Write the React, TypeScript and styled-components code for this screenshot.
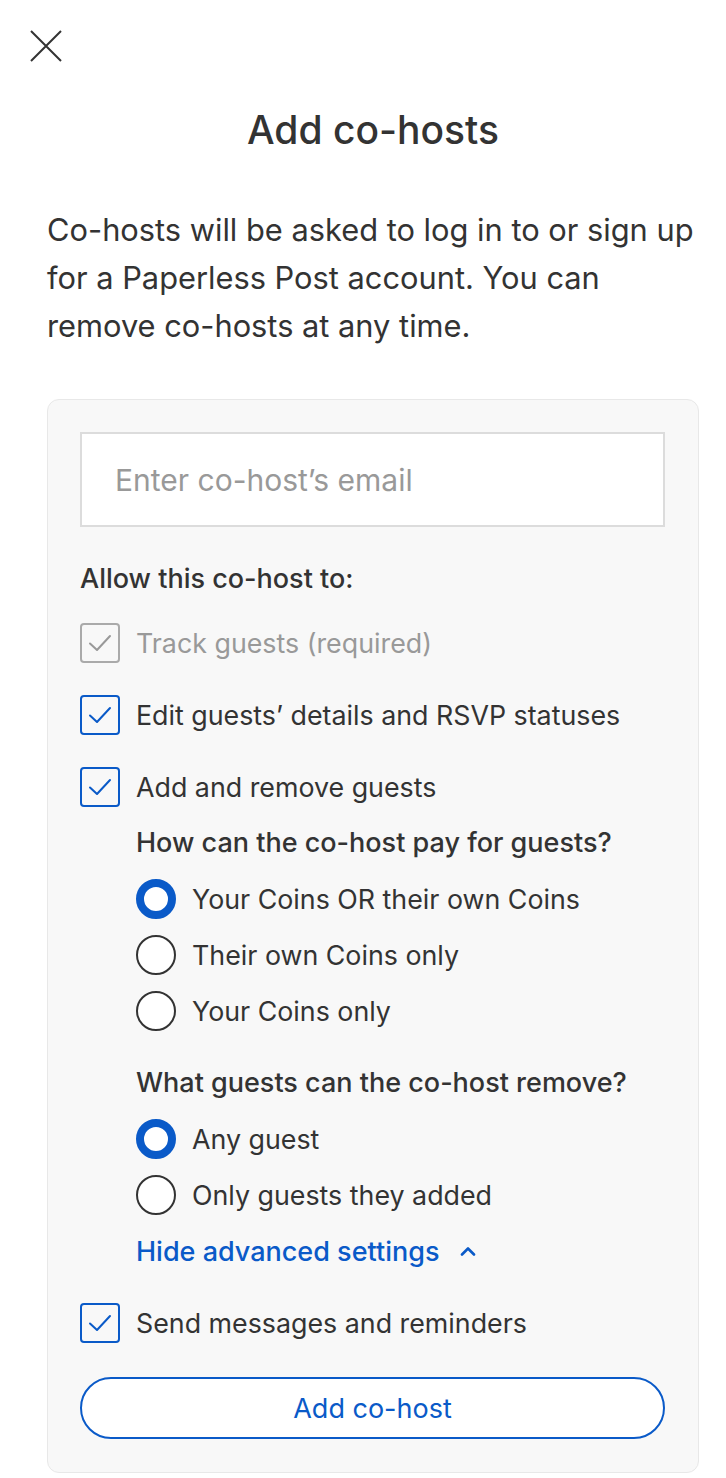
import React from "react";
import styled, { createGlobalStyle } from "styled-components";

const Global = createGlobalStyle`
  * { box-sizing: border-box; }
  body { margin: 0; background: #fff; font-family: Inter, "Open Sans", sans-serif; color: #333; }
`;

const BLUE = "#0a5ac8";

const Page = styled.div`
  width: 726px;
  padding: 30px 27px 0 47px;
  display: flex;
  flex-direction: column;
`;

const CloseButton = styled.button`
  width: 32px;
  height: 32px;
  margin-left: -17px;
  padding: 0;
  border: none;
  background: none;
  display: flex;
  align-items: center;
  justify-content: center;
`;

const Title = styled.h1`
  margin: 48px 0 0;
  font-size: 39px;
  line-height: 40px;
  font-weight: 500;
  text-align: center;
  color: #333;
`;

const Description = styled.p`
  margin: 56px 0 0;
  font-size: 30.8px;
  line-height: 48px;
  color: #333;
`;

const Card = styled.div`
  margin-top: 49px;
  background: #f8f8f8;
  border: 1px solid #e8e8e8;
  border-radius: 12px;
  padding: 32px 33px 33px 32px;
  display: flex;
  flex-direction: column;
`;

const EmailInput = styled.input`
  height: 95px;
  border: 2px solid #dcdcdc;
  background: #fff;
  padding: 0 33px;
  font-family: inherit;
  font-size: 30px;
  color: #333;
  outline: none;
  &::placeholder { color: #999; }
`;

const SectionLabel = styled.div<{ $mt: number; $indent?: boolean }>`
  margin-top: ${(p) => p.$mt}px;
  margin-left: ${(p) => (p.$indent ? 56 : 0)}px;
  font-size: 27px;
  line-height: 32px;
  font-weight: 500;
  color: #333;
`;

const OptionRow = styled.label<{ $mt: number; $indent?: boolean }>`
  margin-top: ${(p) => p.$mt}px;
  margin-left: ${(p) => (p.$indent ? 56 : 0)}px;
  display: flex;
  align-items: center;
  gap: 16px;
  height: 40px;
`;

const OptionText = styled.span<{ $muted?: boolean }>`
  font-size: 26.8px;
  color: ${(p) => (p.$muted ? "#999" : "#333")};
`;

const Box = styled.span<{ $disabled?: boolean }>`
  width: 40px;
  height: 40px;
  flex: none;
  border: 2px solid ${(p) => (p.$disabled ? "#aaa" : BLUE)};
  border-radius: 4px;
  display: flex;
  align-items: center;
  justify-content: center;
`;

const Radio = styled.span<{ $on?: boolean }>`
  width: 40px;
  height: 40px;
  flex: none;
  border-radius: 50%;
  border: ${(p) => (p.$on ? `8px solid ${BLUE}` : "2px solid #333")};
  background: #fff;
`;

const Toggle = styled.button`
  margin-top: 20px;
  margin-left: 56px;
  align-self: flex-start;
  padding: 0;
  border: none;
  background: none;
  height: 32px;
  display: flex;
  align-items: center;
  gap: 21px;
  font-family: inherit;
  font-size: 27px;
  font-weight: 500;
  color: ${BLUE};
`;

const AddButton = styled.button`
  margin-top: 34px;
  height: 62px;
  border: 2px solid ${BLUE};
  border-radius: 31px;
  background: #fff;
  font-family: inherit;
  font-size: 27px;
  color: ${BLUE};
`;

const Check = ({ color }: { color: string }) => (
  <svg width="26" height="20" viewBox="0 0 26 20" fill="none">
    <path d="M3 10.5 L10 17 L23 3" stroke={color} strokeWidth="2" strokeLinecap="round" strokeLinejoin="round" />
  </svg>
);

const CheckOption = ({ label, mt, disabled }: { label: string; mt: number; disabled?: boolean }) => (
  <OptionRow $mt={mt}>
    <Box $disabled={disabled}>
      <Check color={disabled ? "#999" : BLUE} />
    </Box>
    <OptionText $muted={disabled}>{label}</OptionText>
  </OptionRow>
);

const RadioOption = ({ label, mt, on }: { label: string; mt: number; on?: boolean }) => (
  <OptionRow $mt={mt} $indent>
    <Radio $on={on} />
    <OptionText>{label}</OptionText>
  </OptionRow>
);

export default function App() {
  return (
    <>
      <Global />
      <Page>
        <CloseButton aria-label="Close">
          <svg width="32" height="32" viewBox="0 0 32 32">
            <path d="M1 1 L31 31 M31 1 L1 31" stroke="#333" strokeWidth="2" />
          </svg>
        </CloseButton>
        <Title>Add co-hosts</Title>
        <Description>
          Co-hosts will be asked to log in to or sign up for a Paperless Post account. You can remove co-hosts at any time.
        </Description>
        <Card>
          <EmailInput placeholder="Enter co-host’s email" />
          <SectionLabel $mt={36}>Allow this co-host to:</SectionLabel>
          <CheckOption mt={28} label="Track guests (required)" disabled />
          <CheckOption mt={32} label="Edit guests’ details and RSVP statuses" />
          <CheckOption mt={32} label="Add and remove guests" />
          <SectionLabel $mt={20} $indent>How can the co-host pay for guests?</SectionLabel>
          <RadioOption mt={20} on label="Your Coins OR their own Coins" />
          <RadioOption mt={16} label="Their own Coins only" />
          <RadioOption mt={16} label="Your Coins only" />
          <SectionLabel $mt={36} $indent>What guests can the co-host remove?</SectionLabel>
          <RadioOption mt={20} on label="Any guest" />
          <RadioOption mt={16} label="Only guests they added" />
          <Toggle>
            Hide advanced settings
            <svg width="16" height="10" viewBox="0 0 16 10" fill="none">
              <path d="M2 8.5 L8 2.5 L14 8.5" stroke={BLUE} strokeWidth="2.6" strokeLinecap="round" strokeLinejoin="round" />
            </svg>
          </Toggle>
          <CheckOption mt={36} label="Send messages and reminders" />
          <AddButton>Add co-host</AddButton>
        </Card>
      </Page>
    </>
  );
}
